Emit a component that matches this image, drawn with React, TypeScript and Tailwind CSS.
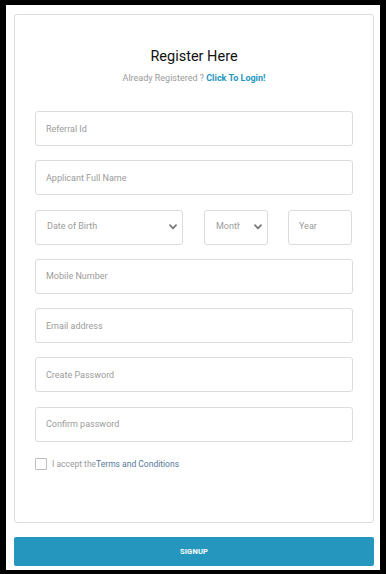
import React from "react";

function Chevron({ className }: { className?: string }) {
  return (
    <svg className={className} width="8" height="6" viewBox="0 0 8 6" fill="none">
      <path d="M1 1.2 L4 4.3 L7 1.2" stroke="#7a7a7a" strokeWidth="1.8" strokeLinecap="round" strokeLinejoin="round" />
    </svg>
  );
}

function Field({ placeholder, type = "text" }: { placeholder: string; type?: string }) {
  return (
    <input
      type={type}
      placeholder={placeholder}
      className="h-[35px] w-full rounded-[3px] border border-[#dcdcdc] bg-white px-[10px] text-[9px] text-[#333] outline-none placeholder:text-[#9b9b9b]"
    />
  );
}

export default function App() {
  return (
    <div
      className="h-[574px] w-[386px] border-t-[5px] border-l-[6px] border-r-[6px] border-b-[4px] border-black bg-white"
      style={{ fontFamily: "Roboto, 'Open Sans', Arial, sans-serif" }}
    >
      <div className="flex h-full flex-col px-[8px] pt-[9px]">
        <div className="flex h-[509px] w-[360px] flex-col rounded-[3px] border border-[#dddddd] px-[20px] pt-[32px]">
          <h1 className="text-center text-[14.5px] leading-[20px] font-normal text-[#111]">Register Here</h1>
          <p className="mt-[5px] text-center text-[9px] leading-[12px] text-[#9a9a9a]">
            Already Registered ? <span className="font-bold text-[#2596be]">Click To Login!</span>
          </p>

          <div className="mt-[27px] flex flex-col gap-[14.3px]">
            <Field placeholder="Referral Id" />
            <Field placeholder="Applicant Full Name" />
            <div className="flex h-[35px] items-stretch">
              <div className="flex w-[148px] items-center justify-between rounded-[3px] border border-[#dcdcdc] pl-[11px] pr-[5px]">
                <span className="text-[9px] text-[#9b9b9b]">Date of Birth</span>
                <Chevron />
              </div>
              <div className="ml-[21px] flex w-[64px] items-center justify-between rounded-[3px] border border-[#dcdcdc] pl-[11px] pr-[5px]">
                <span className="w-[24px] overflow-hidden whitespace-nowrap text-[9px] text-[#9b9b9b]">Month</span>
                <Chevron />
              </div>
              <div className="ml-[20px] flex w-[64px] items-center rounded-[3px] border border-[#dcdcdc] pl-[10px]">
                <span className="text-[9px] text-[#9b9b9b]">Year</span>
              </div>
            </div>
            <Field placeholder="Mobile Number" />
            <Field placeholder="Email address" type="email" />
            <Field placeholder="Create Password" />
            <Field placeholder="Confirm password" />
          </div>

          <label className="mt-[16px] flex items-center gap-[5px]">
            <span className="h-[12px] w-[12px] rounded-[1px] border border-[#bdbdbd] bg-white" />
            <span className="text-[8.5px] leading-[12px] text-[#9a9a9a]">
              I accept the<span className="text-[#55799a]">Terms and Conditions</span>
            </span>
          </label>
        </div>

        <button className="mt-[14px] h-[29px] w-[360px] rounded-[2px] bg-[#2596be] text-[7.5px] font-bold tracking-[0.2px] text-white">
          SIGNUP
        </button>
      </div>
    </div>
  );
}
